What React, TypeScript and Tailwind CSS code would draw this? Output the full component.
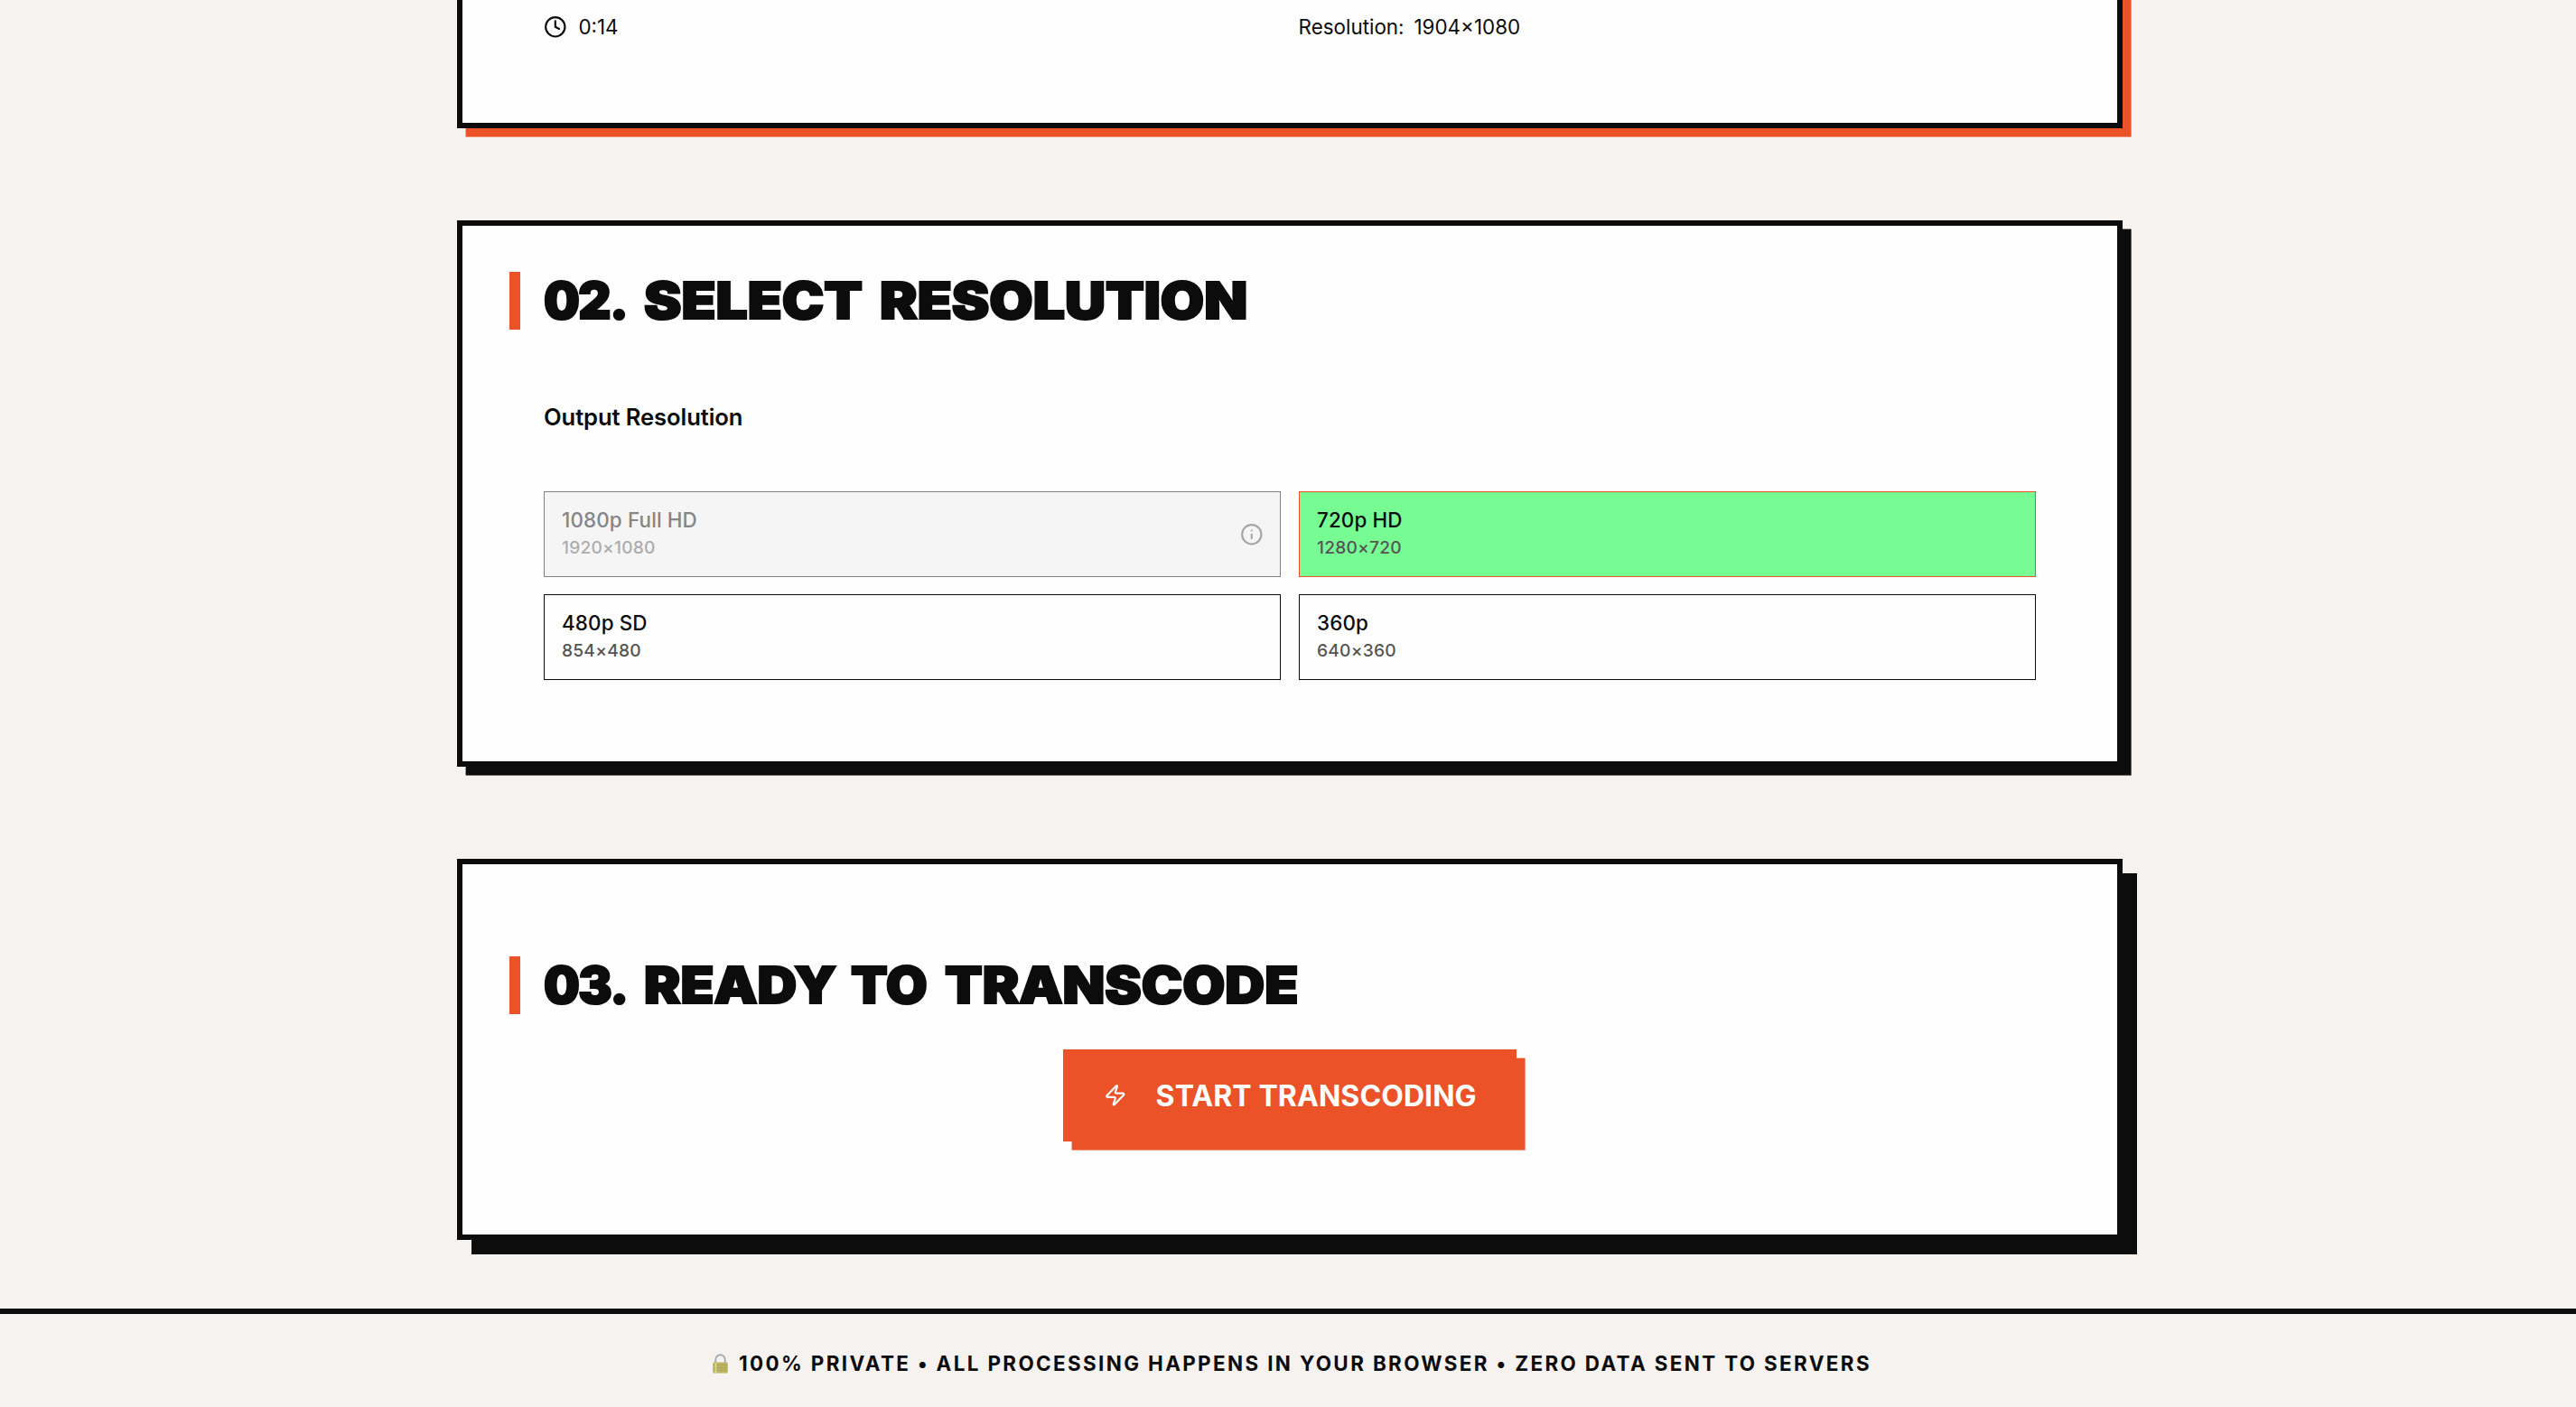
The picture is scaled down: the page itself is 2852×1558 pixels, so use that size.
import React, { useState } from "react";
import clsx from "clsx";
import { Clock, Info, Zap } from "lucide-react";

type Preset = {
  id: string;
  label: string;
  size: string;
  disabled?: boolean;
};

const PRESETS: Preset[] = [
  { id: "1080p", label: "1080p Full HD", size: "1920×1080", disabled: true },
  { id: "720p", label: "720p HD", size: "1280×720" },
  { id: "480p", label: "480p SD", size: "854×480" },
  { id: "360p", label: "360p", size: "640×360" },
];

function Word({ className, children }: { className: string; children: React.ReactNode }) {
  return (
    <span className={clsx("block", className)}>
      <span className="inline-block origin-left scale-x-(--stretch) whitespace-nowrap">{children}</span>
    </span>
  );
}

function SectionTitle({ className, children }: { className?: string; children: React.ReactNode }) {
  return (
    <div className={clsx("flex items-start gap-[26px] pl-[52px]", className)}>
      <div className="h-16 w-3 bg-[#eb5228]" />
      <h2 className="flex text-[56px] font-black leading-16 [-webkit-text-stroke:2.2px_#0c0c0c]">{children}</h2>
    </div>
  );
}

function ResolutionOption({ preset, active, onSelect }: { preset: Preset; active: boolean; onSelect: () => void }) {
  return (
    <button
      type="button"
      disabled={preset.disabled}
      onClick={onSelect}
      className={clsx(
        "flex items-center justify-between border pl-[19px] pr-[18px] text-left",
        preset.disabled && "border-[#828080] bg-[#f5f5f5] text-[#868686]",
        !preset.disabled && active && "border-[#eb5228] bg-[#77fc94]",
        !preset.disabled && !active && "border-[#0c0c0c] bg-[#fefefe]"
      )}
    >
      <div className="pb-[3px]">
        <div className="text-[22.4px] font-medium leading-8 tracking-[0.14px]">{preset.label}</div>
        <div className={clsx("text-[19.2px] font-medium leading-7 tracking-[0.2px]", preset.disabled ? "text-[#adadad]" : "text-[#555555]")}>
          {preset.size}
        </div>
      </div>
      {preset.disabled && <Info className="size-[25.6px] text-[#a6a6a6]" />}
    </button>
  );
}

function LockIcon() {
  return (
    <svg className="h-[22px] w-[17px]" viewBox="0 0 17 22" fill="none">
      <path d="M3.2 10.5V6.8a5.3 5.6 0 0 1 10.6 0v3.7" stroke="#a3adb5" strokeWidth="2" />
      <rect x="0.3" y="9.6" width="16.4" height="11.8" rx="0.8" fill="#bdb565" />
      <path d="M0.6 12.6h15.8M0.6 15.4h15.8M0.6 18.2h15.8" stroke="#a79f52" strokeWidth="0.8" />
      <path d="M3.4 9.8v11.4" stroke="#dcd68f" strokeWidth="1.8" />
    </svg>
  );
}

export default function App() {
  const [selected, setSelected] = useState("720p");

  return (
    <div className="h-[1558px] w-full overflow-hidden bg-[#f6f2f0] font-['Inter',sans-serif] text-[#0c0c0c]">
      <main className="ml-[506px] w-[1844px]">
        {/* source file details */}
        <section className="-mt-4 h-[158px] border-6 border-[#0c0c0c] bg-[#fefefe] pt-6 shadow-[9.6px_9.6px_0_#eb5228]">
          <div className="grid grid-cols-2 gap-[19.2px] px-[90px] text-[22.4px] leading-8">
            <div className="flex items-center gap-[12.8px]">
              <Clock className="size-[25.6px]" />
              <span>0:14</span>
            </div>
            <div className="flex gap-[11px]">
              <span>Resolution:</span>
              <span>1904×1080</span>
            </div>
          </div>
        </section>

        <section className="mt-[102px] h-[605px] border-6 border-[#0c0c0c] bg-[#fefefe] pt-[51px] shadow-[9.6px_9.6px_0_#0c0c0c]">
          <SectionTitle>
            <Word className="w-[110.5px] tracking-[-1.5px] [--stretch:1]">02.</Word>
            <Word className="w-[261px] [--stretch:1.11]">SELECT</Word>
            <Word className="w-[404px] [--stretch:1.113]">RESOLUTION</Word>
          </SectionTitle>
          <div className="px-[90px]">
            <h3 className="mt-[81px] text-[25.6px] font-semibold leading-8 tracking-[-0.1px]">Output Resolution</h3>
            <div className="mt-[66px] grid auto-rows-[95px] grid-cols-2 gap-x-[20px] gap-y-[19px]">
              {PRESETS.map((p) => (
                <ResolutionOption key={p.id} preset={p} active={p.id === selected} onSelect={() => setSelected(p.id)} />
              ))}
            </div>
          </div>
        </section>

        <section className="mt-[102px] h-[422px] border-6 border-[#0c0c0c] bg-[#fefefe] pt-[102px] shadow-[16px_16px_0_#0c0c0c]">
          <SectionTitle>
            <Word className="w-[111px] tracking-[-1.5px] [--stretch:1]">03.</Word>
            <Word className="w-[229px] [--stretch:1.08]">READY</Word>
            <Word className="w-[103.5px] [--stretch:1.06]">TO</Word>
            <Word className="w-[389px] [--stretch:1.085]">TRANSCODE</Word>
          </SectionTitle>
          <button
            type="button"
            className="mx-auto mt-[39px] flex h-[102px] w-[502px] items-center gap-8 bg-[#eb5228] pl-[45px] text-[32px] font-bold tracking-[0.08px] text-white shadow-[9.6px_9.6px_0_#eb5228]"
          >
            <Zap className="size-[25.6px] shrink-0" />
            <span className="whitespace-nowrap pt-0.5">START TRANSCODING</span>
          </button>
        </section>
      </main>

      <footer className="mt-[76px] flex h-[109px] items-start justify-center border-t-6 border-[#0c0c0c] pl-[9px] pt-[39px]">
        <p className="flex items-center gap-3 text-[22.4px] font-bold leading-8 tracking-[2.38px]">
          <LockIcon />
          <span className="whitespace-nowrap">100% PRIVATE • ALL PROCESSING HAPPENS IN YOUR BROWSER • ZERO DATA SENT TO SERVERS</span>
        </p>
      </footer>
    </div>
  );
}
